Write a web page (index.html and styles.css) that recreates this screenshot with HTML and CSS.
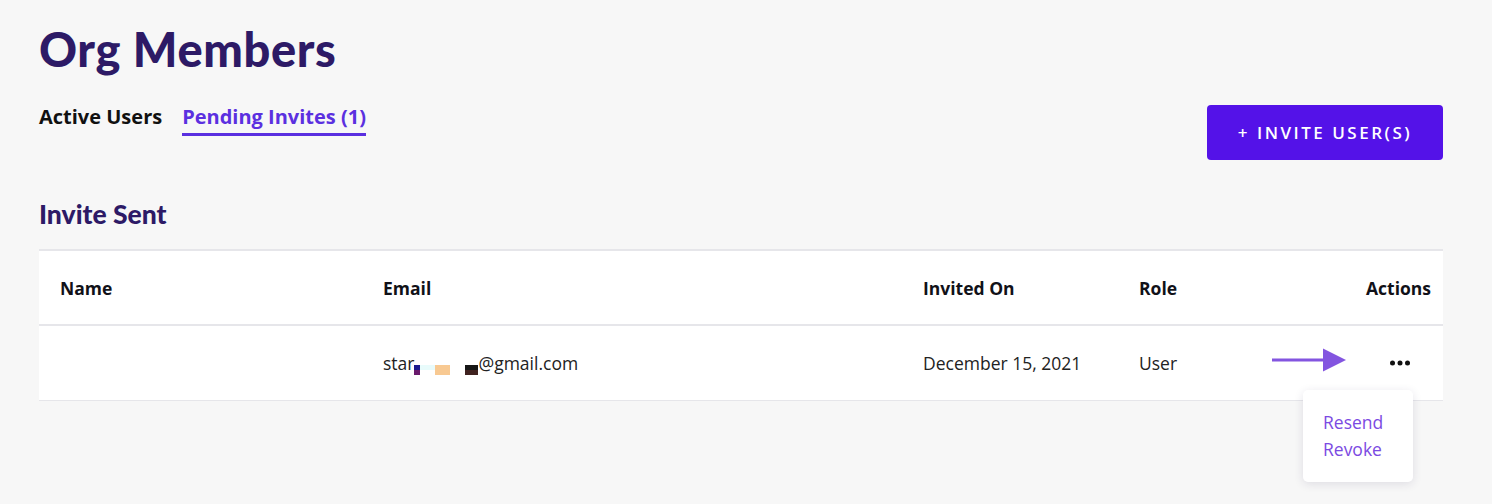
FILE: index.html
```html
<!DOCTYPE html>
<html lang="en">
<head>
<meta charset="utf-8">
<title>Org Members</title>
<link rel="stylesheet" href="styles.css">
</head>
<body>
<main class="page">
  <h1 class="title">Org Members</h1>
  <div class="toolbar">
    <nav class="tabs">
      <a class="tab">Active Users</a>
      <a class="tab tab-active">Pending Invites (1)</a>
    </nav>
    <button class="invite-btn">+ INVITE USER(S)</button>
  </div>
  <h2 class="section-title">Invite Sent</h2>
  <div class="table">
    <div class="row head">
      <div class="cell c-name">Name</div>
      <div class="cell">Email</div>
      <div class="cell">Invited On</div>
      <div class="cell">Role</div>
      <div class="cell c-actions">Actions</div>
    </div>
    <div class="row-wrap">
      <div class="row body">
        <div class="cell c-name"></div>
        <div class="cell">star<span class="redact"><span class="r1"></span><span class="r2"></span><span class="r3"></span><span class="r4"></span><span class="r5"></span></span>@gmail.com</div>
        <div class="cell">December 15, 2021</div>
        <div class="cell">User</div>
        <div class="cell c-dots">
          <svg class="dots" width="22" height="6" viewBox="0 0 22 6"><circle cx="3.5" cy="3" r="2.5"/><circle cx="11" cy="3" r="2.5"/><circle cx="18.5" cy="3" r="2.5"/></svg>
        </div>
      </div>
      <svg class="arrow" width="75" height="24" viewBox="0 0 75 24"><line x1="0" y1="12" x2="54" y2="12" stroke="#8355e0" stroke-width="3"/><polygon points="51,0.5 74,12 51,23.5" fill="#8355e0"/></svg>
      <div class="menu">
        <div class="menu-item">Resend</div>
        <div class="menu-item">Revoke</div>
      </div>
    </div>
  </div>
</main>
</body>
</html>
```
FILE: styles.css
```css
html, body {
  margin: 0;
  padding: 0;
  background: #f7f7f7;
  min-height: 504px;
}
body {
  font-family: "Open Sans", "Liberation Sans", sans-serif;
  color: #1a1a1a;
}
.page {
  box-sizing: border-box;
  min-height: 504px;
  padding: 22px 49px 0 39px;
}
.title {
  margin: 0;
  font-family: Lato, "Open Sans", sans-serif;
  font-weight: 900;
  font-size: 47px;
  line-height: 54px;
  color: #2d1a66;
  letter-spacing: 0.6px;
}
.toolbar {
  display: flex;
  justify-content: space-between;
  align-items: flex-start;
  margin-top: 28px;
}
.tabs {
  display: flex;
  gap: 20px;
}
.tab {
  font-size: 20px;
  font-weight: 700;
  line-height: 26px;
  padding-bottom: 3px;
  border-bottom: 3px solid transparent;
  color: #111;
}
.tab-active {
  color: #5b30e0;
  border-bottom-color: #5a2fe0;
}
.invite-btn {
  margin-top: 1px;
  height: 55px;
  width: 236px;
  border: 0;
  border-radius: 4px;
  background: #5412e8;
  color: #fff;
  font-family: "Open Sans", sans-serif;
  font-size: 17px;
  font-weight: 600;
  letter-spacing: 2.5px;
  cursor: pointer;
}
.section-title {
  margin: 38px 0 0;
  font-family: Lato, "Open Sans", sans-serif;
  font-weight: 900;
  font-size: 26.5px;
  line-height: 32px;
  color: #2d1a66;
}
.table {
  margin-top: 19px;
  background: #fff;
  border-top: 2px solid #e6e6ea;
}
.row {
  display: grid;
  grid-template-columns: 344px 540px 216px 1fr 77px;
  align-items: center;
}
.row.head {
  height: 73px;
  border-bottom: 2px solid #e6e6ea;
  font-weight: 700;
  font-size: 17.5px;
  color: #111118;
}
.row-wrap {
  position: relative;
}
.row.body {
  height: 74px;
  border-bottom: 1px solid #e6e6ea;
  font-size: 17.5px;
  color: #222;
}
.cell {
  white-space: nowrap;
}
.c-name {
  padding-left: 21px;
}
.c-actions {
  padding-right: 12px;
  text-align: right;
}
.c-dots {
  display: flex;
  justify-content: center;
  padding-right: 10px;
}
.dots {
  display: block;
  fill: #111;
}
.redact {
  display: inline-flex;
  vertical-align: -5px;
  height: 10px;
  width: 64px;
}
.redact span { height: 10px; display: block; }
.r1 { width: 6px; background: linear-gradient(#1c1a8e 50%, #6a1a6c 50%); }
.r2 { width: 15px; background: linear-gradient(#e8fbfb 50%, #fff 50%); }
.r3 { width: 15px; background: #f8c992; }
.r4 { width: 15px; background: transparent; }
.r5 { width: 13px; background: linear-gradient(#161616 50%, #402220 50%); }
.arrow {
  position: absolute;
  right: 96px;
  top: 22px;
}
.menu {
  position: absolute;
  right: 30px;
  top: 64px;
  width: 110px;
  box-sizing: border-box;
  padding: 19px 20px;
  background: #fff;
  border-radius: 5px;
  box-shadow: 0 2px 10px rgba(40, 30, 80, 0.12);
  z-index: 2;
}
.menu-item {
  font-size: 17.5px;
  line-height: 27px;
  color: #7b4ae2;
}
```
